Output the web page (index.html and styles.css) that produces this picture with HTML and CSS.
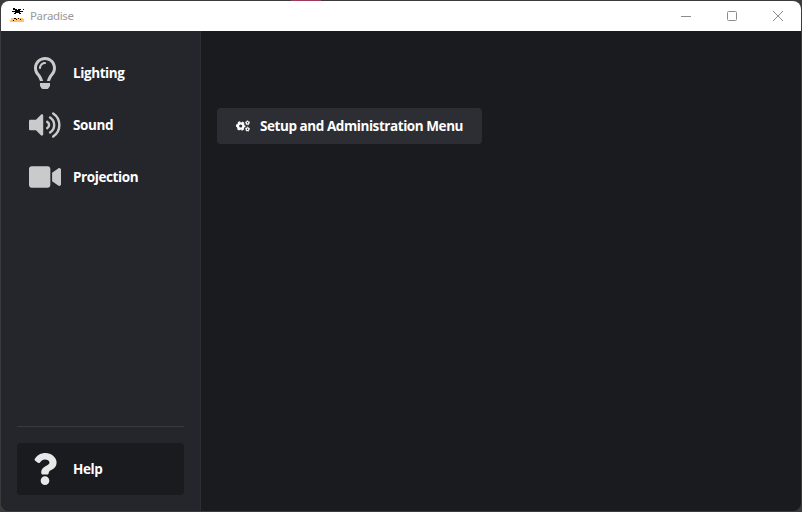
FILE: index.html
```html
<!DOCTYPE html>
<html lang="en">
<head>
<meta charset="utf-8">
<title>Paradise</title>
<link rel="stylesheet" href="styles.css">
</head>
<body>
<div class="desktop">
<div class="window">
  <header class="titlebar">
    <svg class="app-icon" viewBox="0 0 16 16" shape-rendering="crispEdges"><path fill="#fbc66b" d="M2 10h12v1h1v3H1v-2h1z"/><path fill="#000" d="M4 0h2v1h2v1h1V1h3v1h-1v1h3v1h-3v1h1v1h-2V5H7v1H5V5h1V4H3V3h3V2H4zM14 1h1v1h-1zM5 10h2v1H5zM9 10h1v1H9zM7 11h1v1H7zM11 11h1v1h-1zM4 12h1v1H4z"/></svg>
    <span class="title">Paradise</span>
    <div class="controls">
      <svg viewBox="0 0 12 12"><path d="M1 6.500h10"/></svg>
      <svg viewBox="0 0 12 12"><rect x="1.500" y="1.500" width="9" height="9" rx="1"/></svg>
      <svg viewBox="0 0 12 12"><path d="M1 1l10 10M11 1L1 11"/></svg>
    </div>
  </header>
  <div class="body">
    <nav class="sidebar">
      <a class="item"><svg viewBox="0 0 352 512"><path d="M176 80c-52.94 0-96 43.06-96 96 0 8.84 7.16 16 16 16s16-7.16 16-16c0-35.3 28.72-64 64-64 8.84 0 16-7.16 16-16s-7.16-16-16-16zM96.06 459.17c0 3.15.93 6.22 2.68 8.84l24.51 36.84c2.97 4.46 7.97 7.14 13.32 7.14h78.85c5.36 0 10.36-2.68 13.32-7.14l24.51-36.84c1.74-2.62 2.67-5.7 2.68-8.84l.05-43.18H96.02l.04 43.18zM176 0C73.72 0 0 82.970 0 176c0 44.37 16.45 84.85 43.56 115.78 16.64 18.99 42.74 58.8 52.42 92.16v.06h48v-.12c-.01-4.77-.72-9.51-2.15-14.07-5.59-17.81-22.82-64.77-62.17-109.67-20.54-23.43-31.52-53.15-31.61-84.14-.2-73.64 59.67-128 127.95-128 70.58 0 128 57.42 128 128 0 30.97-11.24 60.85-31.65 84.14-39.11 44.61-56.42 91.47-62.1 109.46a47.507 47.507 0 0 0-2.22 14.3v.1h48v-.05c9.68-33.37 35.78-73.18 52.42-92.16C335.55 260.85 352 220.37 352 176 352 78.8 273.2 0 176 0z"/></svg><span>Lighting</span></a>
      <a class="item"><svg viewBox="0 0 576 512"><path d="M215.03 71.05L126.06 160H24c-13.26 0-24 10.74-24 24v144c0 13.25 10.74 24 24 24h102.06l88.97 88.95c15.03 15.03 40.97 4.47 40.97-16.97V88.02c0-21.46-25.96-31.98-40.97-16.97z"/><path class="wave" d="M328 199a65 65 0 0 1 0 114M379 122a158 158 0 0 1 0 268M435 48a250 250 0 0 1 0 416"/></svg><span>Sound</span></a>
      <a class="item"><svg viewBox="0 0 576 512"><path d="M336.2 64H47.8C21.4 64 0 85.4 0 111.8v288.4C0 426.6 21.4 448 47.8 448h288.4c26.4 0 47.8-21.4 47.8-47.8V111.8c0-26.4-21.4-47.8-47.8-47.8zm189.4 37.7L416 177.3v157.4l109.6 75.5c21.2 14.6 50.4-.3 50.4-25.7V127.4c0-25.4-29.1-40.4-50.4-25.7z"/></svg><span>Projection</span></a>
      <div class="footer">
        <a class="item help"><svg viewBox="0 0 384 512"><path d="M202.021 0C122.202 0 70.503 32.703 29.914 91.026c-7.363 10.58-5.093 25.086 5.178 32.874l43.138 32.709c10.373 7.865 25.132 6.026 33.253-4.148 25.049-31.381 43.63-49.449 82.757-49.449 30.764 0 68.816 19.799 68.816 49.631 0 22.552-18.617 34.134-48.993 51.164-35.423 19.86-82.299 44.576-82.299 106.405V320c0 13.255 10.745 24 24 24h72.471c13.255 0 24-10.745 24-24v-5.773c0-42.86 125.268-44.645 125.268-160.627C377.504 66.256 286.902 0 202.021 0zM192 373.459c-38.196 0-69.271 31.075-69.271 69.271 0 38.195 31.075 69.27 69.271 69.27s69.271-31.075 69.271-69.271-31.075-69.27-69.271-69.27z"/></svg><span>Help</span></a>
      </div>
    </nav>
    <main class="content">
      <button class="setup"><svg viewBox="0 0 640 512"><g fill="none" stroke="#fff"><circle cx="215" cy="256" r="125" stroke-width="104"/><circle cx="215" cy="256" r="187" stroke-width="62" stroke-dasharray="110 85.820" stroke-dashoffset="55"/><circle cx="528" cy="112" r="62" stroke-width="54"/><circle cx="528" cy="112" r="96" stroke-width="34" stroke-dasharray="56 44.530" stroke-dashoffset="28"/><circle cx="528" cy="400" r="62" stroke-width="54"/><circle cx="528" cy="400" r="96" stroke-width="34" stroke-dasharray="56 44.530" stroke-dashoffset="28"/></g></svg><span>Setup and Administration Menu</span></button>
    </main>
  </div>
</div>
</div>
</body>
</html>
```
FILE: styles.css
```css
* { box-sizing: border-box; }
body { margin: 0; background: #1a1b1e; font-family: "Open Sans", "Noto Sans", sans-serif; }
.desktop {
  height: 512px;
  padding: 1px;
  background: linear-gradient(90deg, transparent 291px, #9c3b60 291px, #9c3b60 321px, transparent 321px) 0 0 / 100% 1px no-repeat, #3b3a3d;
}
.window { display: flex; flex-direction: column; height: 510px; border-radius: 8px; overflow: hidden; background: #1a1b1e; }
.titlebar { display: flex; align-items: center; flex: none; height: 30px; padding-left: 8px; background: #fff; }
.app-icon { width: 16px; height: 16px; margin-right: 5px; }
.title { font: 11.5px/16px "Noto Sans", sans-serif; letter-spacing: -.35px; color: #999; }
.controls { display: flex; margin-left: auto; }
.controls svg { box-sizing: content-box; width: 12px; height: 12px; padding: 0 17px; fill: none; stroke: #8c8c8c; stroke-width: 1; }
.body { display: flex; flex: 1; min-height: 0; }
.sidebar { display: flex; flex-direction: column; width: 200px; padding: 16px; border-right: 1px solid #2c2e33; background: #25262b; }
.item { display: flex; align-items: center; flex: none; height: 52px; padding-left: 12px; gap: 12px; border-radius: 4px; color: #fff; font-size: 13.5px; font-weight: 700; line-height: 20px; letter-spacing: -.4px; }
.item svg { width: 32px; height: 32px; fill: #c9cacb; }
.item .wave { fill: none; stroke: #c9cacb; stroke-width: 44; stroke-linecap: round; }
.footer { margin-top: auto; padding-top: 16px; border-top: 1px solid #373a40; }
.item.help { background: #1a1b1e; }
.item.help svg { fill: #e8e8e8; }
.content { flex: 1; padding: 77px 16px 16px; }
.setup { display: flex; align-items: center; width: 265px; height: 36px; padding: 0 18px 0 19px; gap: 10px; border: 0; border-radius: 4px; background: #2c2e33; color: #fff; font: 700 13.5px/20px "Open Sans", "Noto Sans", sans-serif; letter-spacing: -.43px; white-space: nowrap; }
.setup svg { flex: none; width: 14px; height: 14px; }
```
